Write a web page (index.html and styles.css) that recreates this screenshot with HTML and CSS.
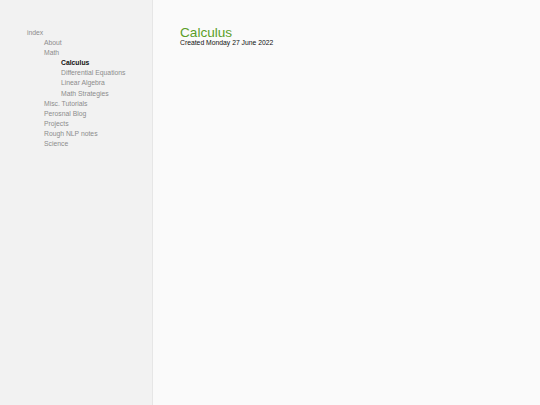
FILE: index.html
```html
<!DOCTYPE html>
<html>
<head>
<meta charset="utf-8">
<link rel="stylesheet" href="styles.css">
</head>
<body>
<div class="page">
  <nav class="sidebar">
    <ul class="tree">
      <li><a>index</a>
        <ul>
          <li><a>About</a></li>
          <li><a>Math</a>
            <ul>
              <li><a class="current">Calculus</a></li>
              <li><a>Differential Equations</a></li>
              <li><a>Linear Algebra</a></li>
              <li><a>Math Strategies</a></li>
            </ul>
          </li>
          <li><a>Misc. Tutorials</a></li>
          <li><a>Perosnal Blog</a></li>
          <li><a>Projects</a></li>
          <li><a>Rough NLP notes</a></li>
          <li><a>Science</a></li>
        </ul>
      </li>
    </ul>
  </nav>
  <main class="content">
    <h1 class="title">Calculus</h1>
    <div class="created">Created Monday 27 June 2022</div>
  </main>
</div>
</body>
</html>
```
FILE: styles.css
```css
html, body {
  margin: 0;
  padding: 0;
  height: 100%;
}
body {
  font-family: "Liberation Sans", Arial, sans-serif;
  background: #fafafa;
}
.page {
  display: flex;
  min-height: 100%;
}
.sidebar {
  width: 153px;
  flex-shrink: 0;
  background: #f2f2f2;
  border-right: 1px solid #e6e6e6;
  box-sizing: border-box;
  padding: 28px 0 0 27px;
}
.tree, .tree ul {
  list-style: none;
  margin: 0;
  padding: 0;
}
.tree ul {
  padding-left: 17px;
}
.tree a {
  display: block;
  font-size: 6.8px;
  line-height: 10.1px;
  color: #8c8c8c;
  white-space: nowrap;
}
.tree a.current {
  color: #111;
  font-weight: bold;
}
.content {
  flex: 1;
  padding: 27px 0 0 27px;
}
.title {
  margin: 0;
  font-weight: normal;
  font-size: 13.6px;
  line-height: 12px;
  color: #5a9e28;
}
.created {
  font-size: 6.8px;
  line-height: 8px;
  color: #111;
}
```
